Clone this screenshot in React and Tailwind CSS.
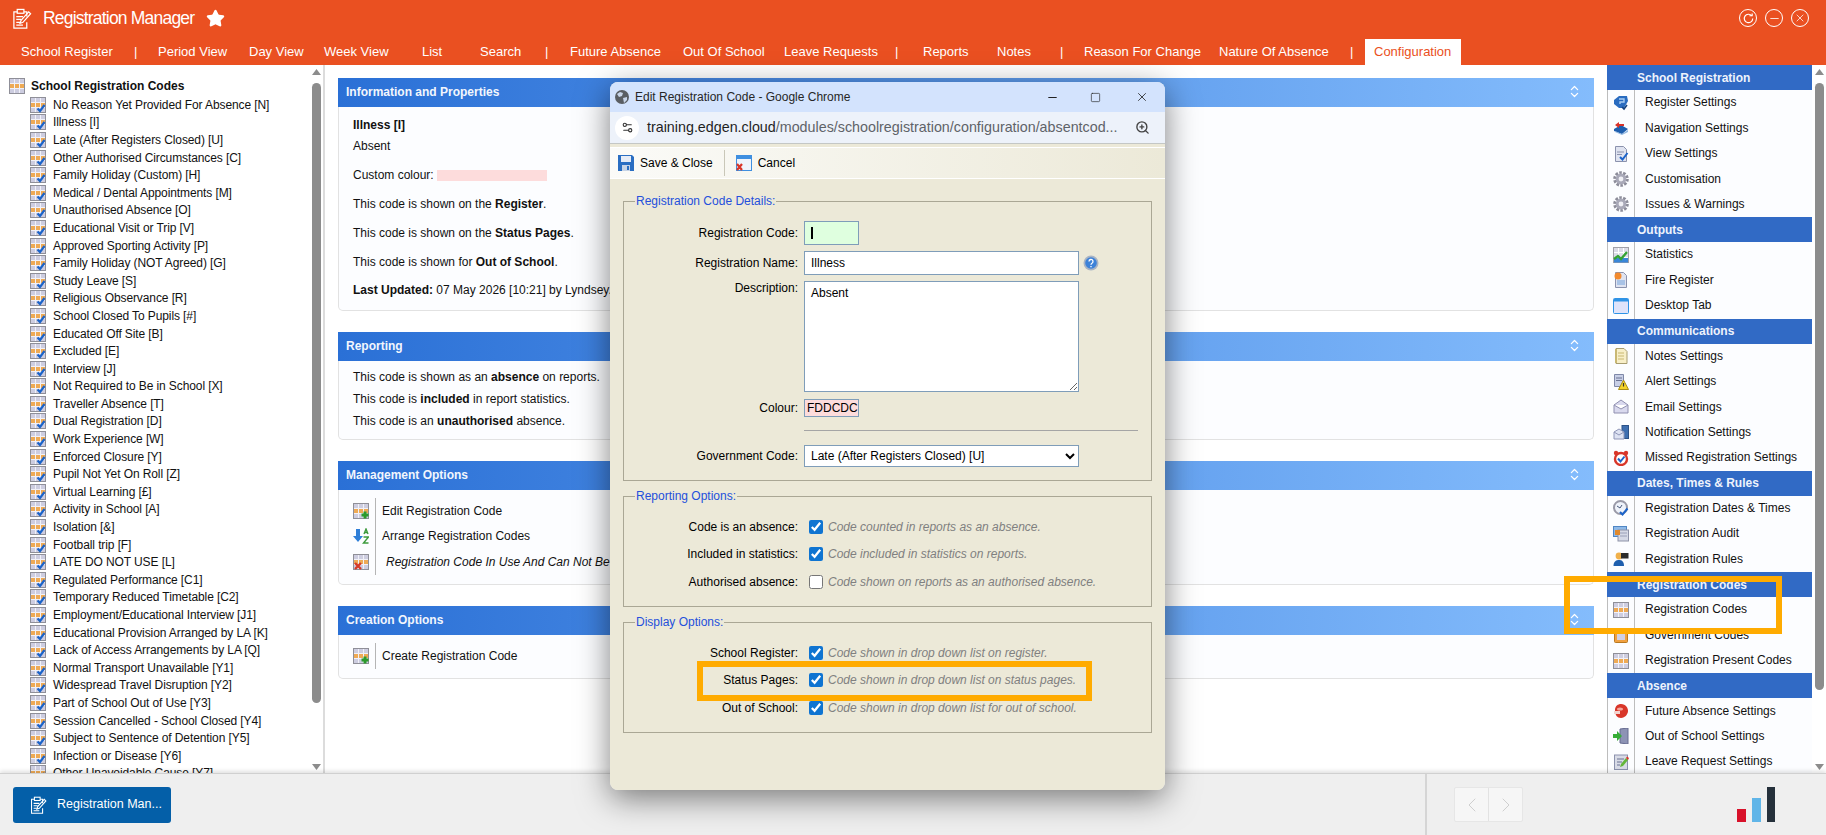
import { ChevronLeft, ChevronRight, ChevronsUpDown, Minus, Settings2, Square, Star, X, ZoomIn } from "lucide-react";

const CODES = [
  "No Reason Yet Provided For Absence [N]", "Illness [I]", "Late (After Registers Closed) [U]",
  "Other Authorised Circumstances [C]", "Family Holiday (Custom) [H]", "Medical / Dental Appointments [M]",
  "Unauthorised Absence [O]", "Educational Visit or Trip [V]", "Approved Sporting Activity [P]",
  "Family Holiday (NOT Agreed) [G]", "Study Leave [S]", "Religious Observance [R]",
  "School Closed To Pupils [#]", "Educated Off Site [B]", "Excluded [E]", "Interview [J]",
  "Not Required to Be in School [X]", "Traveller Absence [T]", "Dual Registration [D]",
  "Work Experience [W]", "Enforced Closure [Y]", "Pupil Not Yet On Roll [Z]", "Virtual Learning [£]",
  "Activity in School [A]", "Isolation [&]", "Football trip [F]", "LATE DO NOT USE [L]",
  "Regulated Performance [C1]", "Temporary Reduced Timetable [C2]", "Employment/Educational Interview [J1]",
  "Educational Provision Arranged by LA [K]", "Lack of Access Arrangements by LA [Q]",
  "Normal Transport Unavailable [Y1]", "Widespread Travel Disruption [Y2]", "Part of School Out of Use [Y3]",
  "Session Cancelled - School Closed [Y4]", "Subject to Sentence of Detention [Y5]",
  "Infection or Disease [Y6]", "Other Unavoidable Cause [Y7]",
];

const NAV = [
  ["School Register", "w-[113px]"], ["|", "w-[24px]"], ["Period View", "w-[91px]"], ["Day View", "w-[75px]"],
  ["Week View", "w-[98px]"], ["List", "w-[58px]"], ["Search", "w-[65px]"], ["|", "w-[25px]"],
  ["Future Absence", "w-[113px]"], ["Out Of School", "w-[101px]"], ["Leave Requests", "w-[111px]"], ["|", "w-[28px]"],
  ["Reports", "w-[74px]"], ["Notes", "w-[63px]"], ["|", "w-[24px]"], ["Reason For Change", "w-[135px]"],
  ["Nature Of Absence", "w-[131px]"], ["|", "w-[15px]"],
];

const SETTINGS = [
  ["School Registration", [["Register Settings", "register"], ["Navigation Settings", "book"], ["View Settings", "view"], ["Customisation", "gear"], ["Issues & Warnings", "gear"]]],
  ["Outputs", [["Statistics", "stats"], ["Fire Register", "fire"], ["Desktop Tab", "desktop"]]],
  ["Communications", [["Notes Settings", "notes"], ["Alert Settings", "alert"], ["Email Settings", "mail"], ["Notification Settings", "notify"], ["Missed Registration Settings", "alarm"]]],
  ["Dates, Times & Rules", [["Registration Dates & Times", "clock"], ["Registration Audit", "audit"], ["Registration Rules", "rules"]]],
  ["Registration Codes", [["Registration Codes", "grid"], ["Government Codes", "gov"], ["Registration Present Codes", "grid"]]],
  ["Absence", [["Future Absence Settings", "future"], ["Out of School Settings", "door"], ["Leave Request Settings", "leave"]]],
];

function ModuleIcon({ className }) {
  return (
    <svg viewBox="0 0 20 22" className={className} fill="none" stroke="currentColor" strokeWidth="1.300">
      <path d="M12 4h3v5M5 4H1.500v17H15v-6" />
      <rect x="5" y="1.500" width="7" height="4" />
      <path d="M4 9h7M4 12h5M4 15h4M4 18h7" />
      <path d="M8 16l1-3 8-9 2 2-8 9z" />
    </svg>
  );
}

function GridIcon({ badge, className = "w-4 h-4 shrink-0" }) {
  return (
    <svg viewBox="0 0 16 16" className={className}>
      <rect x="0.500" y="0.500" width="15" height="15" fill="#cdcde0" stroke="#8f8f98" />
      <rect x="1" y="5.500" width="14" height="5" fill="#eeaa55" />
      <path d="M5.500 1v14M10.500 1v14M1 5.500h14M1 10.500h14" stroke="#f1f1f8" strokeWidth="1" />
      {badge === "check" && <path d="M7.500 11.500l2.500 2.500 4.500-6" fill="none" stroke="#1b63c9" strokeWidth="2.200" />}
      {badge === "plus" && <path d="M12 8.500v7M8.500 12h7" stroke="#2c9a2c" strokeWidth="3" />}
      {badge === "x" && <path d="M2 9l6 6M8 9l-6 6" stroke="#d63a28" strokeWidth="2.400" />}
    </svg>
  );
}

function SortIcon() {
  return (
    <svg viewBox="0 0 16 16" className="w-4 h-4 shrink-0">
      <path d="M3 1h4v7h3l-5 6-5-6h3z" fill="#2f7fd8" />
      <path d="M11 6l2-5 2 5M11.800 4.500h2.400" fill="none" stroke="#3c9a3c" strokeWidth="1.400" />
      <path d="M10.500 9h5l-5 6h5" fill="none" stroke="#3c9a3c" strokeWidth="1.400" />
    </svg>
  );
}

function SideIcon({ name }) {
  const doc = <path d="M2.500 0.500h8l3 3v12h-11z" fill="#dfe3f0" stroke="#8b92ad" />;
  const check = <path d="M7 11l2.500 2.500 5-6.500" fill="none" stroke="#1b63c9" strokeWidth="2" />;
  const art = {
    register: <><path d="M1 5l5-4h8l1 5-4 7H6L1 9z" fill="#2a6cc0" /><path d="M6 4h5v3H7v2" fill="none" stroke="#a9cdf3" strokeWidth="1.400" /><path d="M9 12l2 2 3-4" fill="none" stroke="#16427e" strokeWidth="1.600" /></>,
    book: <><path d="M1 9l7-4 7 4-6 5-8-3z" fill="#1f5fae" /><path d="M2 11l7 3 6-4v2l-6 3-7-3z" fill="#8fb6e0" /><path d="M2 5l4-3v2h5v2H6v2z" fill="#d8322a" /></>,
    view: <>{doc}<path d="M4 6h7M4 8.500h5" stroke="#8b92ad" />{check}</>,
    gear: <><circle cx="8" cy="8" r="6" fill="none" stroke="#8d8d9a" strokeWidth="3.600" strokeDasharray="2.400 1.300" /><circle cx="8" cy="8" r="5.400" fill="#a9a9b8" /><circle cx="8" cy="8" r="2.400" fill="#f0f0f5" /></>,
    stats: <><rect x="0.500" y="0.500" width="15" height="15" fill="#dcdce8" stroke="#a0a0a8" /><path d="M5.500 1v14M10.500 1v14M1 5.500h14M1 10.500h14" stroke="#fff" /><rect x="1" y="11" width="14" height="4.500" fill="#3a86d8" /><path d="M1 12l4-3 3 3 6-7" fill="none" stroke="#35a335" strokeWidth="2.400" /></>,
    fire: <>{doc}<rect x="4" y="8" width="8" height="5" fill="#a9c3e6" /><circle cx="5" cy="4" r="3.500" fill="#f28a2e" /></>,
    desktop: <><rect x="0.500" y="0.500" width="15" height="15" rx="1" fill="#dfe3fa" stroke="#2f93e6" /><rect x="1" y="1" width="14" height="2.500" fill="#2f93e6" /></>,
    notes: <><path d="M3 0.500h8l3 3v12H3z" fill="#f8efc8" stroke="#a89d70" /><path d="M5 5h6M5 8h6M5 11h6" stroke="#c9b873" /><path d="M3 1v14" stroke="#c9b873" strokeWidth="2" /></>,
    alert: <><path d="M1.500 0.500h9v12h-9z" fill="#c8cfe6" stroke="#7f88a8" /><path d="M3 4h6M3 6.500h6" stroke="#6a7393" /><path d="M10.500 6l5 9.500h-10z" fill="#f5d327" stroke="#a88e14" /><path d="M10.500 9v3.500" stroke="#333" strokeWidth="1.200" /></>,
    mail: <><path d="M1 6l7-5 7 5v8H1z" fill="#d9d9ee" stroke="#8f8fb0" /><path d="M1 6l7 4 7-4" fill="#fff" stroke="#8f8fb0" /></>,
    notify: <><rect x="9" y="0.500" width="6.500" height="13" fill="#3f6fb0" stroke="#2d5288" /><path d="M1 7l5-3 5 3v7H1z" fill="#dde2f2" stroke="#8f96b8" /><path d="M1 7l5 3 5-3" fill="none" stroke="#8f96b8" /></>,
    alarm: <><circle cx="8" cy="9" r="6" fill="#fff" stroke="#d8362a" strokeWidth="2.400" /><circle cx="3" cy="3" r="2.200" fill="#d8362a" /><circle cx="13" cy="3" r="2.200" fill="#d8362a" /><path d="M5 8.500l2.500 3 4-5" fill="none" stroke="#1b63c9" strokeWidth="2" /></>,
    clock: <><circle cx="7.500" cy="7.500" r="6.500" fill="#eef2fa" stroke="#9a9aa8" strokeWidth="2" /><path d="M4 6l3 2 2-3" fill="none" stroke="#4a5a7a" /><path d="M7 12l2.500 2.500 5-6" fill="none" stroke="#1b63c9" strokeWidth="2" /></>,
    audit: <><rect x="0.500" y="0.500" width="13" height="10" fill="#8eb9e8" stroke="#4f86c4" /><rect x="5" y="4" width="10.500" height="11" fill="#d5d9e6" stroke="#8e93a8" /><rect x="2" y="4" width="5" height="5" fill="#e08a2e" /><path d="M7 7h7M7 10h7" stroke="#9aa0b8" /></>,
    rules: <><circle cx="6" cy="5" r="3.400" fill="#f0b04a" /><path d="M0.500 15c0-5 3-6 5.500-6s5 1 5 6z" fill="#1f5fae" /><rect x="8" y="2" width="7.500" height="5.500" fill="#2b2b2b" /></>,
    gov: <><rect x="1.500" y="3" width="13" height="12.500" rx="1" fill="#f0a040" stroke="#b97820" /><rect x="4" y="6" width="8" height="7" fill="#d0d0e4" /><rect x="5" y="1" width="6" height="3" fill="#a9a9b8" /></>,
    future: <><path d="M2 7c0-4 3-6 6-6 5 0 7 4 7 7s-3 7-7 7c-4 0-6-3-6-8z" fill="#d8362a" /><ellipse cx="7" cy="6" rx="3" ry="1.600" fill="#f5a59c" /><path d="M1 8h6v3H1z" fill="#f3d3cf" /></>,
    door: <><path d="M7 1l8-1v16l-8-1z" fill="#8d93b5" stroke="#666c90" /><path d="M0 6h4V3l5 5-5 5v-3H0z" fill="#36ad36" /></>,
    leave: <><rect x="1.500" y="1" width="13" height="14.500" fill="#d8dbe6" stroke="#8b92ad" /><path d="M4 5h7M4 8h5M4 11h3" stroke="#6a7393" /><path d="M7 13l1-3 5-6 2 2-5 6z" fill="#63b63a" /><path d="M13 4l1-1.500 2 1.500-1 2z" fill="#d8362a" /></>,
  };
  if (name === "grid") return <GridIcon />;
  return <svg viewBox="0 0 16 16" className="w-4 h-4 shrink-0">{art[name]}</svg>;
}

function Scrollbar({ thumb }) {
  return (
    <div className="flex h-full w-[9px] flex-col items-center pt-[4px]">
      <svg viewBox="0 0 9 6" className="h-[6px] w-[9px] shrink-0 fill-[#8c8c8c]"><path d="M4.500 0L9 6H0z" /></svg>
      <div className={`mt-[8px] w-[9px] rounded-[5px] bg-[#8c8c8c] ${thumb}`} />
      <svg viewBox="0 0 9 6" className="mt-auto mb-[3px] h-[6px] w-[9px] shrink-0 fill-[#8c8c8c]"><path d="M0 0h9L4.500 6z" /></svg>
    </div>
  );
}

function Panel({ title, body, children }) {
  return (
    <section>
      <div className="flex h-[29px] items-center justify-between bg-gradient-to-r from-[#2a70d6] to-[#84bcfc] pb-[2px] pl-[8px] pr-[12px]">
        <span className="text-[12px] font-bold text-[#f2f6fd]">{title}</span>
        <ChevronsUpDown size={15} strokeWidth={2} className="text-white" />
      </div>
      <div className={`rounded-b-[5px] border-x border-b border-[#e2e2e2] bg-[#fcfdff] ${body}`}>{children}</div>
    </section>
  );
}

function ActionRow({ icon, italic, children }) {
  return (
    <div className="flex h-[25.500px] items-center">
      <div className="flex h-full w-[23px] shrink-0 items-center border-r border-[#b5b5b5]">{icon}</div>
      <span className={italic ? "pl-[10px] italic whitespace-nowrap" : "pl-[6px] whitespace-nowrap"}>{children}</span>
    </div>
  );
}

function FieldRow({ label, className = "items-center", children }) {
  return (
    <div className={`flex ${className}`}>
      <label className="w-[174px] shrink-0 text-right leading-[14px] text-black">{label}:</label>
      <div className="ml-[6px] flex items-center">{children}</div>
    </div>
  );
}

function CheckRow({ label, hint, checked }) {
  return (
    <div className="flex h-[27.500px] items-center">
      <span className="w-[174px] shrink-0 text-right text-black">{label}:</span>
      <input type="checkbox" defaultChecked={checked} className="ml-[11px] h-[14px] w-[14px] accent-[#0f74d1]" />
      <span className="ml-[5px] italic whitespace-nowrap text-[#808080]">{hint}</span>
    </div>
  );
}

function Group({ legend, h, children }) {
  return (
    <fieldset className={`border border-[#aaa795] ${h}`}>
      <legend className="ml-[11px] h-[16px] px-[1px] text-[12px] leading-[16px] text-[#2450dc]">{legend}</legend>
      {children}
    </fieldset>
  );
}

function EditDialog() {
  return (
    <div className="absolute left-[610px] top-[82px] z-10 h-[708px] w-[555px] overflow-hidden rounded-[8px] bg-[#ece9d8]">
      <div className="flex h-[30px] items-center bg-[#d3e3fd] pl-[5px] text-[12px] text-[#262626]">
        <svg viewBox="0 0 14 14" className="h-[14px] w-[14px]"><circle cx="7" cy="7" r="7" fill="#5a5e63" /><path d="M2 4l3-2 3 1-1 3-3 1zM8 8l4-1 0 3-3 3z" fill="#c9d6ea" /></svg>
        <span className="ml-[6px]">Edit Registration Code - Google Chrome</span>
        <div className="ml-auto flex items-center gap-[34px] pr-[16px] text-[#222]">
          <Minus size={13} className="-mr-[3px]" />
          <Square size={11} strokeWidth={1.4} />
          <X size={14} strokeWidth={1.400} />
        </div>
      </div>
      <div className="flex h-[32px] items-center border-b border-[#c4c7c5] bg-[#edf2fa] pl-[5px] text-[14.300px]">
        <div className="flex h-[24px] w-[24px] items-center justify-center rounded-full bg-white"><Settings2 size={13} className="text-[#333]" /></div>
        <span className="ml-[8px] whitespace-nowrap text-[#5f6368]"><span className="text-[#1f1f1f]">training.edgen.cloud</span>/modules/schoolregistration/configuration/absentcod...</span>
        <ZoomIn size={15} strokeWidth={2.200} className="ml-auto mr-[15px] text-[#444]" />
      </div>
      <div className="mt-[3px] flex h-[32px] items-center border-y border-white bg-gradient-to-r from-[#fbfbf8] to-[#ece9d8] pl-[8px] text-[12px] text-black">
        <svg viewBox="0 0 16 16" className="h-4 w-4"><path d="M0 0h14l2 2v14H0z" fill="#2a6ec2" /><rect x="3" y="1" width="10" height="6" fill="#e6ecf6" /><rect x="4" y="10" width="8" height="6" fill="#c7d4e6" /><rect x="9" y="11" width="2" height="4" fill="#2a6ec2" /></svg>
        <span className="ml-[6px]">Save &amp; Close</span>
        <div className="ml-[11px] h-[26px] w-px bg-[#c9c7b8]" />
        <svg viewBox="0 0 16 16" className="ml-[11px] h-4 w-4"><rect x="0.500" y="0.500" width="15" height="15" fill="#eef3fb" stroke="#3f8fe0" /><rect x="1" y="1" width="14" height="3" fill="#3f8fe0" /><path d="M1 9l5 6M6 9l-5 6" stroke="#d8362a" strokeWidth="2.200" /></svg>
        <span className="ml-[6px]">Cancel</span>
      </div>
      <div className="ml-[13px] mt-[14px] flex w-[529px] flex-col gap-[7px] text-[12px]">
        <Group legend="Registration Code Details:" h="h-[288px]">
          <div className="flex flex-col pt-[12px]">
            <FieldRow label="Registration Code">
              <div className="flex h-[24px] w-[55px] items-center border border-[#7f9db9] bg-[#dfffdf] pl-[6px]"><span className="h-[12px] w-[1.500px] bg-black" /></div>
            </FieldRow>
            <div className="mt-[6px]">
              <FieldRow label="Registration Name">
                <input readOnly value="Illness" className="h-[24px] w-[275px] border border-[#7f9db9] bg-white px-[6px] text-black outline-none" />
                <svg viewBox="0 0 16 16" className="ml-[4px] h-[16px] w-[16px]"><circle cx="8" cy="8" r="7.500" fill="#a9b4c4" /><circle cx="8" cy="8" r="5.800" fill="#3d82d8" /><path d="M6 6.500a2 2 0 1 1 3 1.700c-.7.400-1 .8-1 1.600M8 11v1.200" fill="none" stroke="#fff" strokeWidth="1.300" /></svg>
              </FieldRow>
            </div>
            <div className="mt-[6px]">
              <FieldRow label="Description" className="items-start">
                <textarea readOnly value="Absent" className="block h-[111px] w-[275px] border border-[#7f9db9] bg-white px-[6px] py-[2px] text-black outline-none" />
              </FieldRow>
            </div>
            <div className="mt-[7px]">
              <FieldRow label="Colour">
                <div className="flex h-[18px] w-[55px] items-center border border-[#7f9db9] bg-[#fddcdc] pl-[2px] text-black">FDDCDC</div>
              </FieldRow>
            </div>
            <div className="ml-[180px] mt-[13px] h-px w-[334px] bg-[#a5a5a5]" />
            <div className="mt-[14px]">
              <FieldRow label="Government Code">
                <select className="h-[22px] w-[275px] border border-[#7f9db9] bg-white pl-[2px] text-black" defaultValue="U">
                  <option value="U">Late (After Registers Closed) [U]</option>
                </select>
              </FieldRow>
            </div>
          </div>
        </Group>
        <Group legend="Reporting Options:" h="h-[119px]">
          <div className="pt-[9px]">
            <CheckRow label="Code is an absence" hint="Code counted in reports as an absence." checked />
            <CheckRow label="Included in statistics" hint="Code included in statistics on reports." checked />
            <CheckRow label="Authorised absence" hint="Code shown on reports as an authorised absence." />
          </div>
        </Group>
        <Group legend="Display Options:" h="h-[119px]">
          <div className="pt-[9px]">
            <CheckRow label="School Register" hint="Code shown in drop down list on register." checked />
            <CheckRow label="Status Pages" hint="Code shown in drop down list on status pages." checked />
            <CheckRow label="Out of School" hint="Code shown in drop down list for out of school." checked />
          </div>
        </Group>
      </div>
    </div>
  );
}

export default function App() {
  return (
    <div className="relative flex h-screen w-[1826px] flex-col overflow-hidden bg-white font-['Liberation_Sans',Arial,sans-serif] text-[12px] text-[#111]">
      {/* top bar */}
      <header className="h-[65px] shrink-0 bg-[#ea5021] text-white">
        <div className="flex h-[36px] items-center pl-[12px]">
          <ModuleIcon className="h-[21px] w-[20px]" />
          <span className="ml-[11px] text-[17.500px] tracking-[-0.800px]">Registration Manager</span>
          <Star size={19} fill="currentColor" className="ml-[12px]" />
          <div className="ml-auto flex items-center gap-[8px] pr-[17px]">
            <div className="flex h-[18px] w-[18px] items-center justify-center rounded-full border-[1.5px] border-white"><svg viewBox="0 0 12 12" className="h-[11px] w-[11px]" fill="none" stroke="currentColor" strokeWidth="1.300"><path d="M9.500 3A4.600 4.600 0 1 0 10.600 6" /><path d="M7 3h3V0.500" /></svg></div>
            <div className="flex h-[18px] w-[18px] items-center justify-center rounded-full border-[1.5px] border-white"><Minus size={13} strokeWidth={1.5} /></div>
            <div className="flex h-[18px] w-[18px] items-center justify-center rounded-full border-[1.5px] border-white"><X size={12} strokeWidth={1.5} /></div>
          </div>
        </div>
        <nav className="mt-[3px] flex h-[26px] items-center pl-[21px] text-[13px]">
          {NAV.map(([label, w], i) => (
            <span key={i} className={`shrink-0 whitespace-nowrap ${w}`}>{label}</span>
          ))}
          <span className="flex h-[26px] w-[96px] items-center bg-white pl-[9px] text-[#ea5021]">Configuration</span>
        </nav>
      </header>

      <main className="flex min-h-0 flex-1">
        {/* code tree */}
        <aside className="flex w-[325px] shrink-0 border-r-2 border-[#dcdcdc] pr-[2px]">
          <div className="min-w-0 flex-1 overflow-hidden pl-[9px] pt-[12px]">
            <div className="flex h-[17px] items-center gap-[3px]">
              <GridIcon />
              <span className="ml-[3px] font-bold">School Registration Codes</span>
            </div>
            <ul className="pl-[21px] pt-[2px] tracking-[-0.100px]">
              {CODES.map((code) => (
                <li key={code} className="flex h-[17.600px] items-center gap-[7px] whitespace-nowrap">
                  <GridIcon badge="check" />
                  {code}
                </li>
              ))}
            </ul>
          </div>
          <Scrollbar thumb="h-[620px]" />
        </aside>

        {/* panels */}
        <div className="flex w-[1282px] shrink-0 flex-col gap-[21px] pl-[13px] pr-[13px] pt-[13px]">
          <Panel title="Information and Properties" body="h-[204px] pl-[14px] pt-[8px] leading-[21px]">
            <p className="font-bold">Illness [I]</p>
            <p>Absent</p>
            <div className="mt-[8px] flex flex-col gap-[8px]">
              <p className="flex h-[21px] items-center">Custom colour:<span className="ml-[3px] h-[11px] w-[110px] bg-[#fddcdc]" /></p>
              <p>This code is shown on the <b>Register</b>.</p>
              <p>This code is shown on the <b>Status Pages</b>.</p>
              <p>This code is shown for <b>Out of School</b>.</p>
              <p className="-mt-px whitespace-nowrap"><b>Last Updated:</b> 07 May 2026 [10:21] by Lyndsey.Wood</p>
            </div>
          </Panel>
          <Panel title="Reporting" body="h-[79px] pl-[14px] pt-[5px] leading-[22px]">
            <p>This code is shown as an <b>absence</b> on reports.</p>
            <p>This code is <b>included</b> in report statistics.</p>
            <p>This code is an <b>unauthorised</b> absence.</p>
          </Panel>
          <Panel title="Management Options" body="h-[95px] pl-[14px] pt-[8px]">
            <ActionRow icon={<GridIcon badge="plus" />}>Edit Registration Code</ActionRow>
            <ActionRow icon={<SortIcon />}>Arrange Registration Codes</ActionRow>
            <ActionRow icon={<GridIcon badge="x" />} italic>Registration Code In Use And Can Not Be Deleted</ActionRow>
          </Panel>
          <Panel title="Creation Options" body="h-[44px] pl-[14px] pt-[8px]">
            <ActionRow icon={<GridIcon badge="plus" />}>Create Registration Code</ActionRow>
          </Panel>
        </div>

        {/* settings menu */}
        <aside className="flex w-[219px] shrink-0">
          <div className="w-[205px] shrink-0 overflow-hidden bg-[#fcfdff]">
            {SETTINGS.map(([heading, items]) => (
              <div key={heading}>
                <div className="flex h-[25px] items-center bg-[#316ac5] pl-[30px] font-bold text-[#eef3fc]">{heading}</div>
                {items.map(([label, icon]) => (
                  <div key={label} className="flex h-[25.450px] items-center">
                    <div className="flex h-full w-[28px] shrink-0 items-center justify-center border-x border-[#bdbdbd]"><SideIcon name={icon} /></div>
                    <span className="ml-[10px] whitespace-nowrap pb-px">{label}</span>
                  </div>
                ))}
              </div>
            ))}
          </div>
          <div className="ml-[3px]"><Scrollbar thumb="h-[607px]" /></div>
        </aside>
      </main>

      {/* task bar */}
      <footer className="relative z-[1] flex h-[62px] shrink-0 items-center border-t border-[#d0d0d0] bg-[#efefef] pl-[13px] shadow-[0_-2px_4px_rgba(0,0,0,0.12)]">
        <button className="flex h-[36px] w-[158px] items-center rounded-[3px] bg-[#045fa8] pl-[17px] text-[12.500px] text-white">
          <ModuleIcon className="h-[18px] w-[17px]" />
          <span className="ml-[10px]">Registration Man...</span>
        </button>
        <div className="ml-[1254px] h-full w-[2px] bg-[#d5d5d5]" />
        <div className="ml-[27px] flex h-[35px] w-[69px] rounded-[2px] border border-[#e6e6e6] bg-[#f6f6f6] text-[#cfcfcf]">
          <div className="flex flex-1 items-center justify-center border-r border-[#e2e2e2]"><ChevronLeft size={24} strokeWidth={1} /></div>
          <div className="flex flex-1 items-center justify-center"><ChevronRight size={24} strokeWidth={1} /></div>
        </div>
        <div className="ml-[214px] flex h-[35px] items-end gap-[6px]">
          <div className="h-[13px] w-[9px] bg-[#d8112a]" />
          <div className="h-[24px] w-[9px] bg-[#60b5e8]" />
          <div className="h-[35px] w-[8px] bg-[#25303b]" />
        </div>
      </footer>

      {/* dialog and its shadow over the page */}
      <div className="absolute left-[610px] top-[82px] z-[5] h-[708px] w-[555px] rounded-[8px] shadow-[0_8px_32px_rgba(0,0,0,0.5)]" />
      <EditDialog />

      {/* tutorial highlight boxes */}
      <div className="pointer-events-none absolute left-[697px] top-[661px] z-20 h-[40px] w-[395px] border-[6px] border-[#ffab00]" />
      <div className="pointer-events-none absolute left-[1564px] top-[576px] z-20 h-[58px] w-[218px] border-[6px] border-[#ffab00]" />
    </div>
  );
}
